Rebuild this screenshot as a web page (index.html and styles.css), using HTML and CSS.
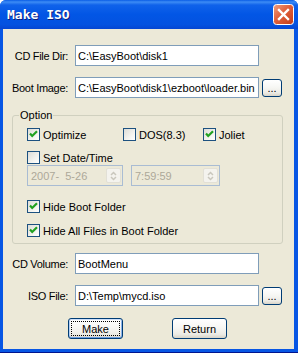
FILE: index.html
```html
<!DOCTYPE html>
<html lang="en">
<head>
<meta charset="UTF-8">
<title>Make ISO</title>
<link rel="stylesheet" href="styles.css">
</head>
<body>
<div class="window">
    <div class="titlebar">
        <span class="title">Make ISO</span>
        <button class="close" title="Close">
            <svg width="21" height="21" viewBox="0 0 21 21">
                <defs>
                    <linearGradient id="cg" x1="0" y1="0" x2="1" y2="1">
                        <stop offset="0" stop-color="#f0a080"/>
                        <stop offset="0.45" stop-color="#e0603c"/>
                        <stop offset="1" stop-color="#c23a16"/>
                    </linearGradient>
                </defs>
                <rect x="0.5" y="0.5" width="20" height="20" rx="3" fill="url(#cg)" stroke="#fff"/>
                <path d="M6 6 L15 15 M15 6 L6 15" stroke="#fff" stroke-width="2.4" stroke-linecap="square"/>
            </svg>
        </button>
    </div>

    <div class="client">
        <div class="row">
            <label class="lbl" for="cdDir">CD File Dir:</label>
            <input class="field" type="text" id="cdDir" value="C:\EasyBoot\disk1">
        </div>
        <div class="row">
            <label class="lbl" for="bootImage">Boot Image:</label>
            <input class="field" type="text" id="bootImage" value="C:\EasyBoot\disk1\ezboot\loader.bin">
            <button class="btn browse">...</button>
        </div>

        <fieldset class="group">
            <legend>Option</legend>
            <div class="opts">
                <span class="check"><span class="box on"><svg width="11" height="11" viewBox="0 0 11 11"><polyline points="2,4.5 4.2,7 9,2.2" fill="none" stroke="#21a121" stroke-width="2.2"/></svg></span>Optimize</span>
                <span class="check"><span class="box"></span>DOS(8.3)</span>
                <span class="check"><span class="box on"><svg width="11" height="11" viewBox="0 0 11 11"><polyline points="2,4.5 4.2,7 9,2.2" fill="none" stroke="#21a121" stroke-width="2.2"/></svg></span>Joliet</span>
            </div>
            <div class="check date-toggle"><span class="box"></span>Set Date/Time</div>
            <div class="dates">
                <div class="picker date">
                    <span>2007-&nbsp; 5-26</span>
                    <span class="spin"><svg width="13" height="12" viewBox="0 0 13 12"><polyline points="4,5 6.5,2.5 9,5" fill="none" stroke="#c9c7bd" stroke-width="1.5"/><polyline points="4,7 6.5,9.5 9,7" fill="none" stroke="#c9c7bd" stroke-width="1.5"/></svg></span>
                </div>
                <div class="picker time">
                    <span>7:59:59</span>
                    <span class="spin"><svg width="13" height="12" viewBox="0 0 13 12"><polyline points="4,5 6.5,2.5 9,5" fill="none" stroke="#c9c7bd" stroke-width="1.5"/><polyline points="4,7 6.5,9.5 9,7" fill="none" stroke="#c9c7bd" stroke-width="1.5"/></svg></span>
                </div>
            </div>
            <div class="check hide-boot"><span class="box on"><svg width="11" height="11" viewBox="0 0 11 11"><polyline points="2,4.5 4.2,7 9,2.2" fill="none" stroke="#21a121" stroke-width="2.2"/></svg></span>Hide Boot Folder</div>
            <div class="check"><span class="box on"><svg width="11" height="11" viewBox="0 0 11 11"><polyline points="2,4.5 4.2,7 9,2.2" fill="none" stroke="#21a121" stroke-width="2.2"/></svg></span>Hide All Files in Boot Folder</div>
        </fieldset>

        <div class="row">
            <label class="lbl" for="volume">CD Volume:</label>
            <input class="field" type="text" id="volume" value="BootMenu">
        </div>
        <div class="row last">
            <label class="lbl" for="isoFile">ISO File:</label>
            <input class="field" type="text" id="isoFile" value="D:\Temp\mycd.iso">
            <button class="btn browse">...</button>
        </div>

        <div class="actions">
            <button class="btn wide default">Make</button>
            <button class="btn wide">Return</button>
        </div>
    </div>
</div>
</body>
</html>
```

FILE: styles.css
```css
body {
    margin: 0;
    font-family: "Liberation Sans", Arial, sans-serif;
    font-size: 11px;
    background: #fff;
}

.window {
    width: 298px;
    height: 353px;
    box-sizing: border-box;
    display: flex;
    flex-direction: column;
    padding: 0 4px 3px 3px;
    background: #0756e4;
    border-bottom: 1px solid #00148e;
    border-radius: 6px 6px 0 0;
}

.titlebar {
    height: 29px;
    margin: 0 -4px 0 -3px;
    padding: 0 4px 0 7px;
    display: flex;
    align-items: center;
    justify-content: space-between;
    border-radius: 6px 6px 0 0;
    background: linear-gradient(to bottom, #0a5de6 0, #3d8cf5 2px, #1062ea 5px, #0256e5 50%, #0452e0 85%, #0646d2 100%);
}

.title {
    color: #fff;
    font: bold 13px "DejaVu Sans Mono", monospace;
    text-shadow: 1px 1px #0f1d7a;
}

.close {
    width: 21px;
    height: 21px;
    padding: 0;
    border: none;
    background: none;
}

.close svg {
    display: block;
}

.client {
    flex: 1;
    padding-top: 16px;
    background: #ece9d8;
}

.row {
    display: flex;
    align-items: center;
    height: 21px;
    margin-bottom: 11px;
}

.row.last {
    margin-bottom: 12px;
}

.lbl {
    width: 65px;
    margin-right: 7px;
    text-align: right;
    letter-spacing: -0.3px;
}

.field {
    width: 184px;
    height: 21px;
    box-sizing: border-box;
    margin: 0;
    padding: 0 0 0 2px;
    border: 1px solid #7f9db9;
    background: #fff;
    font: inherit;
    color: #000;
}

.btn {
    box-sizing: border-box;
    margin: 0;
    padding: 0;
    border: 1px solid #003c74;
    border-radius: 3px;
    background: linear-gradient(to bottom, #fff 0%, #f7f7f4 45%, #ecebe5 80%, #d8d4c8 100%);
    font: inherit;
    color: #000;
}

.browse {
    width: 20px;
    height: 18px;
    margin-left: 3px;
    line-height: 14px;
}

.group {
    margin: 0 11px 9px 9px;
    padding: 6px 8px 6px 14px;
    border: 1px solid #d0d0bf;
    border-radius: 3px;
}

.group legend {
    margin-left: -8px;
    padding: 0 1px;
    line-height: 13px;
}

.opts {
    display: grid;
    grid-template-columns: 96px 80px auto;
    margin-bottom: 10px;
}

.check {
    display: flex;
    align-items: center;
    gap: 3px;
    height: 13px;
}

.box {
    width: 13px;
    height: 13px;
    box-sizing: border-box;
    border: 1px solid #1c5180;
    background: linear-gradient(135deg, #dcdcd7 0%, #f3f3ef 60%, #fff 100%);
}

.box svg {
    display: block;
}

.date-toggle {
    margin-bottom: 1px;
}

.dates {
    display: flex;
    gap: 8px;
    margin-bottom: 14px;
}

.picker {
    height: 21px;
    box-sizing: border-box;
    display: flex;
    align-items: center;
    justify-content: space-between;
    padding: 0 1px 0 3px;
    border: 1px solid #a9bcd3;
    color: #aca899;
}

.date {
    width: 96px;
}

.time {
    width: 89px;
}

.spin {
    width: 15px;
    height: 15px;
    box-sizing: border-box;
    display: flex;
    align-items: center;
    justify-content: center;
    border: 1px solid #e2e0d6;
    border-radius: 2px;
    background: #f4f3ee;
}

.hide-boot {
    margin-bottom: 11px;
}

.actions {
    display: flex;
    gap: 49px;
    padding-left: 65px;
}

.wide {
    width: 55px;
    height: 21px;
}

.default {
    box-shadow: inset 0 1px #cee0fb, inset 0 -1px #6b9de0, inset 1px 0 #b3cff5, inset -1px 0 #8bb3ec;
    outline: 1px dotted #000;
    outline-offset: -4px;
}
```
